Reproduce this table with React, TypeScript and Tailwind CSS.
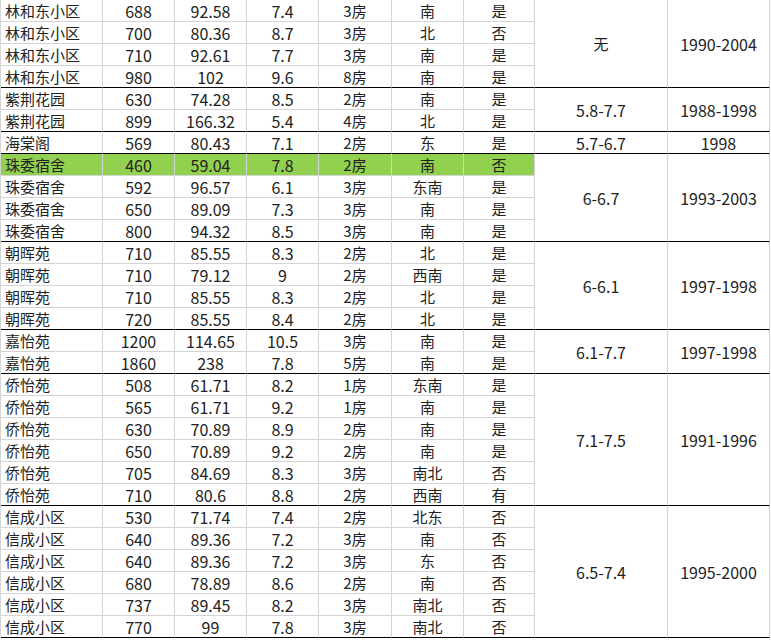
import React from "react";

type Group = {
  range: string;
  years: string;
  rows: string[][];
};

const groups: Group[] = [
  {
    range: "无",
    years: "1990-2004",
    rows: [
      ["林和东小区", "688", "92.58", "7.4", "3房", "南", "是"],
      ["林和东小区", "700", "80.36", "8.7", "3房", "北", "否"],
      ["林和东小区", "710", "92.61", "7.7", "3房", "南", "是"],
      ["林和东小区", "980", "102", "9.6", "8房", "南", "是"],
    ],
  },
  {
    range: "5.8-7.7",
    years: "1988-1998",
    rows: [
      ["紫荆花园", "630", "74.28", "8.5", "2房", "南", "是"],
      ["紫荆花园", "899", "166.32", "5.4", "4房", "北", "是"],
    ],
  },
  {
    range: "5.7-6.7",
    years: "1998",
    rows: [["海棠阁", "569", "80.43", "7.1", "2房", "东", "是"]],
  },
  {
    range: "6-6.7",
    years: "1993-2003",
    rows: [
      ["珠委宿舍", "460", "59.04", "7.8", "2房", "南", "否"],
      ["珠委宿舍", "592", "96.57", "6.1", "3房", "东南", "是"],
      ["珠委宿舍", "650", "89.09", "7.3", "3房", "南", "是"],
      ["珠委宿舍", "800", "94.32", "8.5", "3房", "南", "是"],
    ],
  },
  {
    range: "6-6.1",
    years: "1997-1998",
    rows: [
      ["朝晖苑", "710", "85.55", "8.3", "2房", "北", "是"],
      ["朝晖苑", "710", "79.12", "9", "2房", "西南", "是"],
      ["朝晖苑", "710", "85.55", "8.3", "2房", "北", "是"],
      ["朝晖苑", "720", "85.55", "8.4", "2房", "北", "是"],
    ],
  },
  {
    range: "6.1-7.7",
    years: "1997-1998",
    rows: [
      ["嘉怡苑", "1200", "114.65", "10.5", "3房", "南", "是"],
      ["嘉怡苑", "1860", "238", "7.8", "5房", "南", "是"],
    ],
  },
  {
    range: "7.1-7.5",
    years: "1991-1996",
    rows: [
      ["侨怡苑", "508", "61.71", "8.2", "1房", "东南", "是"],
      ["侨怡苑", "565", "61.71", "9.2", "1房", "南", "是"],
      ["侨怡苑", "630", "70.89", "8.9", "2房", "南", "是"],
      ["侨怡苑", "650", "70.89", "9.2", "2房", "南", "是"],
      ["侨怡苑", "705", "84.69", "8.3", "3房", "南北", "否"],
      ["侨怡苑", "710", "80.6", "8.8", "2房", "西南", "有"],
    ],
  },
  {
    range: "6.5-7.4",
    years: "1995-2000",
    rows: [
      ["信成小区", "530", "71.74", "7.4", "2房", "北东", "否"],
      ["信成小区", "640", "89.36", "7.2", "3房", "南", "否"],
      ["信成小区", "640", "89.36", "7.2", "3房", "东", "否"],
      ["信成小区", "680", "78.89", "8.6", "2房", "南", "否"],
      ["信成小区", "737", "89.45", "8.2", "3房", "南北", "否"],
      ["信成小区", "770", "99", "7.8", "3房", "南北", "否"],
    ],
  },
];

const spanClass: Record<number, string> = {
  1: "row-span-1",
  2: "row-span-2",
  4: "row-span-4",
  6: "row-span-6",
};

// numbers read a touch bigger than the hanzi in the sheet
const isNum = (s: string) => /^[\d.\-]+$/.test(s);

export default function App() {
  return (
    <div
      className="w-[771px] h-[640px] bg-white overflow-hidden text-[15px] text-[#222]"
      style={{ fontFamily: '"Noto Sans CJK SC", "Noto Sans", sans-serif' }}
    >
      <div className="grid grid-cols-[102px_72px_72px_72px_73px_72px_71px_133px_102px] auto-rows-[22px] border-l border-[#d4d4d4] w-[770px]">
        {groups.map((g, gi) =>
          g.rows.map((r, ri) => {
            const last = ri === g.rows.length - 1;
            const green = gi === 3 && ri === 0;
            return (
              <React.Fragment key={`${gi}-${ri}`}>
                {r.map((c, ci) => (
                  <div
                    key={ci}
                    className={`flex items-center leading-none border-r border-b ${
                      last ? "border-b-black" : "border-b-[#d4d4d4]"
                    } border-r-[#d4d4d4] ${green ? "bg-[#92d050]" : ""} ${
                      ci === 0 ? "pl-[4px]" : "justify-center"
                    } ${isNum(c) ? "text-[16px]" : "text-[15px]"}`}
                  >
                    {c}
                  </div>
                ))}
                {ri === 0 && (
                  <>
                    <div
                      className={`${spanClass[g.rows.length]} flex items-center justify-center leading-none border-r border-b border-r-[#d4d4d4] border-b-black ${
                        isNum(g.range) ? "text-[16px]" : "text-[15px]"
                      }`}
                    >
                      {g.range}
                    </div>
                    <div
                      className={`${spanClass[g.rows.length]} flex items-center justify-center leading-none border-r border-b border-r-[#d4d4d4] border-b-black text-[16px]`}
                    >
                      {g.years}
                    </div>
                  </>
                )}
              </React.Fragment>
            );
          })
        )}
      </div>
    </div>
  );
}
